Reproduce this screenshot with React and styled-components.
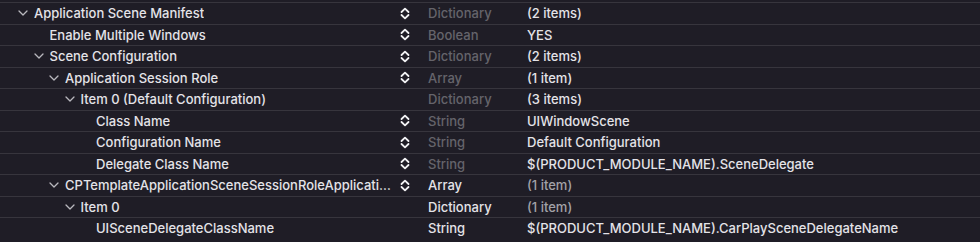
import React from "react";
import styled, { createGlobalStyle } from "styled-components";

const Global = createGlobalStyle`
  html, body { margin: 0; padding: 0; background: #1f1d26; }
  body { font-family: Inter, "Noto Sans", "Liberation Sans", sans-serif; -webkit-font-smoothing: antialiased; }
`;

const Table = styled.div`
  padding-top: 2px;
  width: 980px;
  height: 242px;
  overflow: hidden;
  background: #1f1d26;
`;

const Row = styled.div`
  display: grid;
  grid-template-columns: 394px 34px 99px 1fr;
  align-items: center;
  height: 20.5px;
  border-top: 1px solid #37353d;
  font-size: 13px;
  font-weight: 500;
  color: #e4e3e8;
  white-space: nowrap;
`;

const KeyCell = styled.div`
  display: flex;
  align-items: center;
  min-width: 0;
  padding-left: ${(p) => 18 + 15.5 * p.$level}px;
`;

const Disclosure = styled.span`
  flex: none;
  width: 16px;
  display: flex;
  align-items: center;
  color: #b9b8be;
`;

const KeyText = styled.span`
  overflow: hidden;
  text-overflow: ellipsis;
  min-width: 0;
`;

const StepCell = styled.div`
  display: flex;
  align-items: center;
  padding-left: 6px;
  color: #f2f2f4;
`;

const TypeCell = styled.div`
  color: ${(p) => (p.$bright ? "#e4e3e8" : "#65646b")};
`;

const ValueCell = styled.div`
  color: ${(p) => (p.$dim ? "#a3a2a8" : "#e4e3e8")};
`;

const Chevron = () => (
  <svg width="10" height="6" viewBox="0 0 10 6">
    <path d="M1 1 L5 5 L9 1" fill="none" stroke="currentColor" strokeWidth="1.3" strokeLinecap="round" strokeLinejoin="round" />
  </svg>
);

const Stepper = () => (
  <svg width="10" height="13" viewBox="0 0 10 13">
    <path d="M1.5 5 L5 1.6 L8.5 5" fill="none" stroke="currentColor" strokeWidth="1.8" strokeLinecap="round" strokeLinejoin="round" />
    <path d="M1.5 8 L5 11.4 L8.5 8" fill="none" stroke="currentColor" strokeWidth="1.8" strokeLinecap="round" strokeLinejoin="round" />
  </svg>
);

const rows = [
  { level: 0, open: true, key: "Application Scene Manifest", step: true, type: "Dictionary", value: "(2 items)" },
  { level: 1, key: "Enable Multiple Windows", step: true, type: "Boolean", value: "YES" },
  { level: 1, open: true, key: "Scene Configuration", step: true, type: "Dictionary", value: "(2 items)" },
  { level: 2, open: true, key: "Application Session Role", step: true, type: "Array", value: "(1 item)" },
  { level: 3, open: true, key: "Item 0 (Default Configuration)", type: "Dictionary", value: "(3 items)" },
  { level: 4, key: "Class Name", step: true, type: "String", value: "UIWindowScene" },
  { level: 4, key: "Configuration Name", step: true, type: "String", value: "Default Configuration" },
  { level: 4, key: "Delegate Class Name", step: true, type: "String", value: "$(PRODUCT_MODULE_NAME).SceneDelegate" },
  { level: 2, open: true, key: "CPTemplateApplicationSceneSessionRoleApplication", step: true, type: "Array", value: "(1 item)", bright: true, dim: true },
  { level: 3, open: true, key: "Item 0", type: "Dictionary", value: "(1 item)", bright: true, dim: true },
  { level: 4, key: "UISceneDelegateClassName", type: "String", value: "$(PRODUCT_MODULE_NAME).CarPlaySceneDelegateName", bright: true },
];

export default function App() {
  return (
    <>
      <Global />
      <Table>
        {rows.map((r, i) => (
          <Row key={i}>
            <KeyCell $level={r.level}>
              <Disclosure>{r.open ? <Chevron /> : null}</Disclosure>
              <KeyText>{r.key}</KeyText>
            </KeyCell>
            <StepCell>{r.step ? <Stepper /> : null}</StepCell>
            <TypeCell $bright={r.bright}>{r.type}</TypeCell>
            <ValueCell $dim={r.dim}>{r.value}</ValueCell>
          </Row>
        ))}
      </Table>
    </>
  );
}
